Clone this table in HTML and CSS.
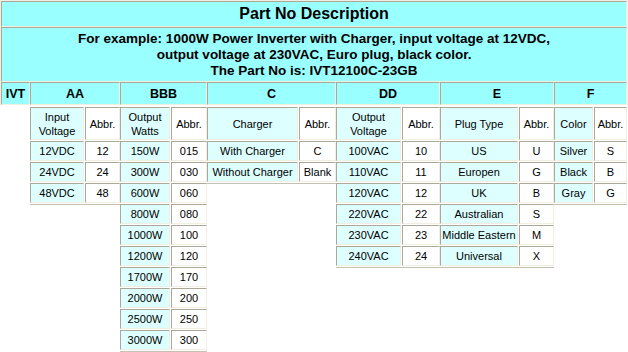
FILE: index.html
```html
<!DOCTYPE html>
<html>
<head>
<meta charset="utf-8">
<title>Part No Description</title>
<link rel="stylesheet" href="styles.css">
</head>
<body>
<table class="desc">
  <colgroup>
    <col class="w-ivt"><col class="w-aa"><col class="w-bbb"><col class="w-c"><col class="w-dd"><col class="w-e"><col class="w-f">
  </colgroup>
  <tr><td class="title" colspan="7">Part No Description</td></tr>
  <tr><td class="example" colspan="7">For example: 1000W Power Inverter with Charger, input voltage at 12VDC,<br>output voltage at 230VAC, Euro plug, black color.<br>The Part No is: IVT12100C-23GB</td></tr>
  <tr class="heads"><td>IVT</td><td>AA</td><td>BBB</td><td>C</td><td>DD</td><td>E</td><td>F</td></tr>
</table>

<div class="codes">
  <div class="spacer"></div>

  <div class="group g-aa">
    <div class="lbl">Input<br>Voltage</div><div class="abbr">Abbr.</div>
    <div class="lbl">12VDC</div><div class="abbr">12</div>
    <div class="lbl">24VDC</div><div class="abbr">24</div>
    <div class="lbl">48VDC</div><div class="abbr">48</div>
  </div>

  <div class="group g-bbb">
    <div class="lbl">Output<br>Watts</div><div class="abbr">Abbr.</div>
    <div class="lbl">150W</div><div class="abbr">015</div>
    <div class="lbl">300W</div><div class="abbr">030</div>
    <div class="lbl">600W</div><div class="abbr">060</div>
    <div class="lbl">800W</div><div class="abbr">080</div>
    <div class="lbl">1000W</div><div class="abbr">100</div>
    <div class="lbl">1200W</div><div class="abbr">120</div>
    <div class="lbl">1700W</div><div class="abbr">170</div>
    <div class="lbl">2000W</div><div class="abbr">200</div>
    <div class="lbl">2500W</div><div class="abbr">250</div>
    <div class="lbl">3000W</div><div class="abbr">300</div>
  </div>

  <div class="group g-c">
    <div class="lbl">Charger</div><div class="abbr">Abbr.</div>
    <div class="lbl">With Charger</div><div class="abbr">C</div>
    <div class="lbl">Without Charger</div><div class="abbr">Blank</div>
  </div>

  <div class="group g-dd">
    <div class="lbl">Output<br>Voltage</div><div class="abbr">Abbr.</div>
    <div class="lbl">100VAC</div><div class="abbr">10</div>
    <div class="lbl">110VAC</div><div class="abbr">11</div>
    <div class="lbl">120VAC</div><div class="abbr">12</div>
    <div class="lbl">220VAC</div><div class="abbr">22</div>
    <div class="lbl">230VAC</div><div class="abbr">23</div>
    <div class="lbl">240VAC</div><div class="abbr">24</div>
  </div>

  <div class="group g-e">
    <div class="lbl">Plug Type</div><div class="abbr">Abbr.</div>
    <div class="lbl">US</div><div class="abbr">U</div>
    <div class="lbl">Europen</div><div class="abbr">G</div>
    <div class="lbl">UK</div><div class="abbr">B</div>
    <div class="lbl">Australian</div><div class="abbr">S</div>
    <div class="lbl">Middle Eastern</div><div class="abbr">M</div>
    <div class="lbl">Universal</div><div class="abbr">X</div>
  </div>

  <div class="group g-f">
    <div class="lbl">Color</div><div class="abbr">Abbr.</div>
    <div class="lbl">Silver</div><div class="abbr">S</div>
    <div class="lbl">Black</div><div class="abbr">B</div>
    <div class="lbl">Gray</div><div class="abbr">G</div>
  </div>
</div>
</body>
</html>
```

FILE: styles.css
```css
html, body {
  margin: 0;
  padding: 0;
  background: #ffffff;
}

body {
  font-family: "Liberation Sans", Arial, sans-serif;
  color: #000000;
  width: 628px;
}

.desc {
  width: 628px;
  table-layout: fixed;
  border-collapse: separate;
  border-spacing: 0;
  border: 1px solid #f1efe2;
  border-bottom: none;
}

.w-ivt { width: 29px; }
.w-aa { width: 90px; }
.w-bbb { width: 87px; }
.w-c { width: 129px; }
.w-dd { width: 104px; }
.w-e { width: 114px; }
.w-f { width: 73px; }

.desc td {
  background: #99ffff;
  border: 1px solid;
  border-color: #aca899 #f1efe2 #f1efe2 #aca899;
  text-align: center;
  font-weight: bold;
  padding: 0;
}

.title {
  font-size: 16px;
  line-height: 24px;
}

.example {
  font-size: 13.5px;
  line-height: 16px;
  padding: 3px 0 2px 0 !important;
}

.heads td {
  font-size: 12.5px;
  line-height: 19px;
  padding: 2px 0 0 0;
}

.codes {
  display: flex;
  align-items: flex-start;
  margin-left: 1px;
  padding-top: 2px;
}

.spacer {
  width: 29px;
  flex: none;
}

.group {
  flex: none;
  display: grid;
  gap: 1px;
  grid-template-rows: 33px;
  grid-auto-rows: 20px;
  padding-bottom: 1px;
  border-bottom: 1px solid #c4c0b4;
  font-size: 11px;
  line-height: 14px;
}

.g-aa { width: 90px; grid-template-columns: 54px 35px; }
.g-bbb { width: 87px; grid-template-columns: 50px 36px; }
.g-c { width: 129px; grid-template-columns: 91px 37px; }
.g-dd { width: 104px; grid-template-columns: 65px 38px; }
.g-e { width: 114px; grid-template-columns: 78px 35px; }
.g-f { width: 73px; grid-template-columns: 39px 33px; }

.lbl, .abbr {
  display: flex;
  align-items: center;
  justify-content: center;
  text-align: center;
  border: 1px solid;
  border-color: #aca899 #f1efe2 #f1efe2 #aca899;
  white-space: nowrap;
}

.lbl {
  background: #ddffff;
}

.abbr {
  background: #ffffff;
}
```
